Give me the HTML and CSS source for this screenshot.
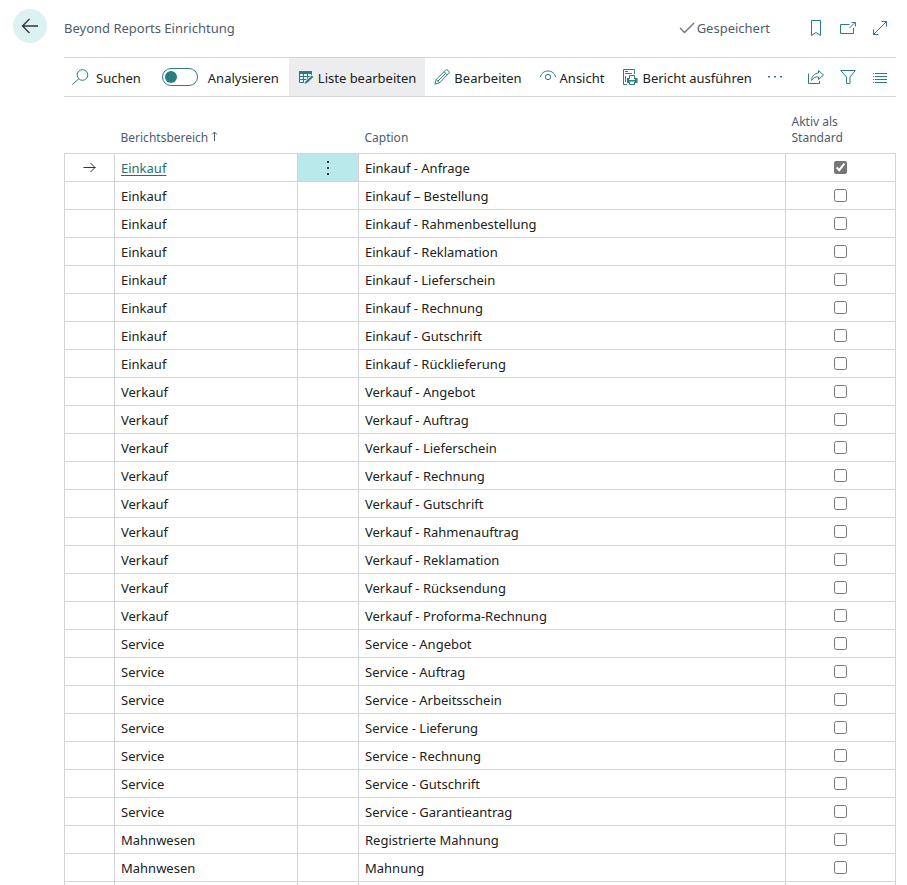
FILE: index.html
```html
<!DOCTYPE html>
<html lang="de">
<head>
    <meta charset="UTF-8">
    <title>Beyond Reports Einrichtung</title>
    <link rel="stylesheet" href="styles.css">
</head>
<body>
<header class="header">
    <button class="back" type="button" aria-label="Zurück">
        <svg width="18" height="16" viewBox="0 0 18 16"><path d="M17 8H1.500M8.500 1L1.500 8l7 7"/></svg>
    </button>
    <h1 class="title">Beyond Reports Einrichtung</h1>
    <div class="saved">
        <svg width="16" height="16" viewBox="0 0 16 16"><path d="M1 8l4.500 4.500L15 3"/></svg>
        <span>Gespeichert</span>
    </div>
    <div class="tools">
        <button type="button" aria-label="Lesezeichen">
            <svg width="16" height="18" viewBox="0 0 16 18"><path d="M3.500 1.500h9v15L8 13.500l-4.500 3z"/></svg>
        </button>
        <button type="button" aria-label="In neuem Fenster öffnen">
            <svg width="16" height="16" viewBox="0 0 16 16"><path d="M9.500 4.500h-9v9h13V8M9.500 8l5.500-5.500M11.500 2.500h4v4"/></svg>
        </button>
        <button type="button" aria-label="Vergrößern">
            <svg width="16" height="16" viewBox="0 0 16 16"><path d="M1.500 14.500l13-13M9.500 1.500h5v5M1.500 9.500v5h5"/></svg>
        </button>
    </div>
</header>

<main class="content">
    <div class="actions">
        <button class="action search" type="button">
            <svg width="17" height="16" viewBox="0 0 17 16"><circle cx="10.500" cy="6" r="5.300"/><path d="M6.700 9.800L.300 15.500"/></svg>
            <span>Suchen</span>
        </button>
        <label class="analyse">
            <input class="switch" type="checkbox" role="switch">
            <span>Analysieren</span>
        </label>
        <button class="action active" type="button">
            <svg width="16" height="16" viewBox="0 0 16 16">
                <path class="fill" d="M1 2h13v3H1z"/>
                <path d="M1.500 4v9.500H7M5.500 4v9.500M9.500 4v7M13.500 4v3M1.500 7.500H12M1.500 10.500H9"/>
                <path class="halo" d="M13.800 6L15.800 8 9 14.500l-3.200 1.300L7 12.500z"/>
            </svg>
            <span>Liste bearbeiten</span>
        </button>
        <button class="action" type="button">
            <svg width="16" height="16" viewBox="0 0 16 16"><path d="M.800 15.200l1.400-4.700L11.500 1.200q1.200-1 2.500.100l.700.700q1 1.300 0 2.500L5.500 13.800zM2.200 10.500l3.300 3.300M10 2.700L13.300 6M3.800 12.200l8-8"/></svg>
            <span>Bearbeiten</span>
        </button>
        <button class="action" type="button">
            <svg width="16" height="16" viewBox="0 0 16 16"><path d="M.500 8C1 4.500 4 2 8 2s7 2.500 7.500 6"/><circle cx="8" cy="8" r="2.700"/></svg>
            <span>Ansicht</span>
        </button>
        <button class="action" type="button">
            <svg width="16" height="16" viewBox="0 0 16 16">
                <path d="M5 15.500H1.500v-15h11V5M3 2.500h3M3 4.500h7M3.500 7v6M7.500 10V6.500h5V10"/>
                <path class="fill" d="M5 9h2v2h6V9h2.500v5H13v-1.500H7.500V14H5z"/>
                <path d="M7.500 13v2.500h5V13"/>
            </svg>
            <span>Bericht ausführen</span>
        </button>
        <button class="action more" type="button" aria-label="Weitere Optionen">
            <svg width="16" height="16" viewBox="0 0 16 16"><path class="fill" d="M1 7h2v1.500H1zM7 7h2v1.500H7zM13 7h2v1.500h-2z"/></svg>
        </button>
        <div class="tools list-tools">
            <button type="button" aria-label="Teilen">
                <svg width="16" height="16" viewBox="0 0 16 16"><path d="M.500 4.500v10h11V12M10.500 1.500l5 4.500-5 4.500V8C7 7.500 5 9 3.500 11.500 4 7 6.500 4.300 10.500 4z"/></svg>
            </button>
            <button type="button" aria-label="Filter">
                <svg width="16" height="16" viewBox="0 0 16 16"><path d="M.700 1.500h14.600L10 8v6.500H6.500V8z"/></svg>
            </button>
            <button type="button" aria-label="Listenansicht">
                <svg width="16" height="16" viewBox="0 0 16 16"><path d="M1 4.500h1M3 4.500h12M1 7.500h1M3 7.500h12M1 10.500h1M3 10.500h12M1 13.500h1M3 13.500h12"/></svg>
            </button>
        </div>
    </div>

    <table class="list">
        <colgroup>
            <col class="col-mark">
            <col class="col-area">
            <col class="col-menu">
            <col>
            <col class="col-default">
        </colgroup>
        <thead>
        <tr>
            <th></th>
            <th scope="col">Berichtsbereich
                <svg width="8" height="11" viewBox="0 0 8 11"><path d="M3.500 10V1M1 3.500L3.500 1 6 3.500"/></svg>
            </th>
            <th></th>
            <th scope="col">Caption</th>
            <th scope="col">Aktiv als Standard</th>
        </tr>
        </thead>
        <tbody id="rows"></tbody>
    </table>
</main>

<script src="script.js"></script>
</body>
</html>
```
FILE: styles.css
```css
* {
    box-sizing: border-box;
}

body {
    margin: 0;
    height: 100vh;
    overflow: hidden;
    background: #fff;
    color: #212121;
    font-family: "Noto Sans", "Open Sans", sans-serif;
    font-size: 13px;
    line-height: 18px;
}

button {
    padding: 0;
    border: none;
    background: none;
    color: inherit;
    font: inherit;
    cursor: pointer;
}

svg {
    display: block;
    flex: none;
    fill: none;
    stroke: #2b7d84;
    stroke-width: 1;
}

svg .fill {
    fill: #2b7d84;
    stroke: none;
}

svg .halo {
    fill: #2b7d84;
    stroke: #ebedee;
}

/* header */
.header {
    display: flex;
    align-items: center;
    height: 57px;
    padding: 9px 19px 10px 13px;
    color: #505c6d;
}

.back {
    display: flex;
    align-items: center;
    justify-content: center;
    align-self: flex-start;
    width: 34px;
    height: 34px;
    margin-right: 17px;
    border-radius: 50%;
    background: #dcf1f2;
}

.back svg {
    stroke: #333;
    stroke-width: 1.3;
}

.title {
    margin: 0;
    font-size: 13px;
    font-weight: 400;
}

.saved {
    display: flex;
    align-items: center;
    gap: 2px;
    margin-left: auto;
    margin-right: 38px;
}

.saved svg {
    stroke: #6b7280;
    stroke-width: 1.3;
}

.tools {
    display: flex;
    align-items: center;
    gap: 16px;
}

/* action bar */
.content {
    padding: 0 11px 0 64px;
}

.actions {
    display: flex;
    align-items: center;
    height: 40px;
    border-top: 1px solid #d2d4d6;
    border-bottom: 1px solid #d2d4d6;
    white-space: nowrap;
}

.actions span {
    padding-top: 2px;
}

.action {
    display: flex;
    align-items: center;
    gap: 4px;
    height: 38px;
    padding: 0 9px;
}

.search {
    gap: 7px;
    padding-left: 8px;
}

.more {
    padding-left: 6px;
}

.active {
    background: #ebedee;
}

.analyse {
    display: flex;
    align-items: center;
    gap: 10px;
    padding: 0 10px 0 12px;
}

.switch {
    display: flex;
    align-items: center;
    appearance: none;
    width: 36px;
    height: 18px;
    margin: 0;
    padding: 0 2px;
    border: 1px solid #2b7d84;
    border-radius: 9px;
}

.switch::before {
    content: "";
    width: 12px;
    height: 12px;
    border-radius: 50%;
    background: #2b7d84;
}

.switch:checked {
    justify-content: flex-end;
}

.list-tools {
    margin-left: auto;
    padding-right: 8px;
}

/* list */
.list {
    width: 100%;
    margin-top: 17px;
    border-collapse: collapse;
    table-layout: fixed;
}

.col-mark {
    width: 50px;
}

.col-area {
    width: 183px;
}

.col-menu {
    width: 61px;
}

.col-default {
    width: 110px;
}

.list th {
    padding: 0 50px 7px 6px;
    color: #505c6d;
    font-size: 12px;
    font-weight: 400;
    line-height: 16px;
    text-align: left;
    vertical-align: bottom;
}

.list th svg {
    display: inline-block;
    stroke: #505c6d;
}

.list td {
    height: 28px;
    padding: 0 6px;
    border: 1px solid #d2d4d8;
}

.list a {
    color: #1f6f76;
    text-underline-offset: 2px;
}

.list .mark svg {
    margin: 0 auto;
    stroke: #333;
}

.list .menu {
    background: #bbe8eb;
}

.menu button {
    display: block;
    width: 100%;
    height: 26px;
}

.menu svg {
    margin: 0 auto;
}

.menu svg .fill {
    fill: #333;
}

.list .check {
    text-align: center;
}

.check input {
    display: block;
    width: 13px;
    height: 13px;
    margin: 0 auto;
    accent-color: #767676;
}
```
FILE: script.js
```js
const groups = [
    ["Einkauf", [
        "Einkauf - Anfrage", "Einkauf – Bestellung", "Einkauf - Rahmenbestellung",
        "Einkauf - Reklamation", "Einkauf - Lieferschein", "Einkauf - Rechnung",
        "Einkauf - Gutschrift", "Einkauf - Rücklieferung"
    ]],
    ["Verkauf", [
        "Verkauf - Angebot", "Verkauf - Auftrag", "Verkauf - Lieferschein",
        "Verkauf - Rechnung", "Verkauf - Gutschrift", "Verkauf - Rahmenauftrag",
        "Verkauf - Reklamation", "Verkauf - Rücksendung", "Verkauf - Proforma-Rechnung"
    ]],
    ["Service", [
        "Service - Angebot", "Service - Auftrag", "Service - Arbeitsschein",
        "Service - Lieferung", "Service - Rechnung", "Service - Gutschrift",
        "Service - Garantieantrag"
    ]],
    ["Mahnwesen", ["Registrierte Mahnung", "Mahnung"]],
    // empty line for new entries
    ["", [""]]
];

const arrow = '<svg width="14" height="12" viewBox="0 0 14 12"><path d="M.5 5.500h12M7.500 1L12 5.500 7.500 10"/></svg>';
const dots = '<button type="button" aria-label="Zeilenmenü"><svg width="2" height="14" viewBox="0 0 2 14">' +
    '<path class="fill" d="M0 0h2v2H0zM0 6h2v2H0zM0 12h2v2H0z"/></svg></button>';

let html = "";
let first = true;
for (const [area, captions] of groups) {
    for (const caption of captions) {
        html += `<tr>
            <td class="mark">${first ? arrow : ""}</td>
            <td>${first ? `<a href="#">${area}</a>` : area}</td>
            <td${first ? ' class="menu"' : ""}>${first ? dots : ""}</td>
            <td>${caption}</td>
            <td class="check"><input type="checkbox" aria-label="Aktiv als Standard ${caption}"${first ? " checked" : ""}></td>
        </tr>`;
        first = false;
    }
}
document.getElementById("rows").innerHTML = html;
```
